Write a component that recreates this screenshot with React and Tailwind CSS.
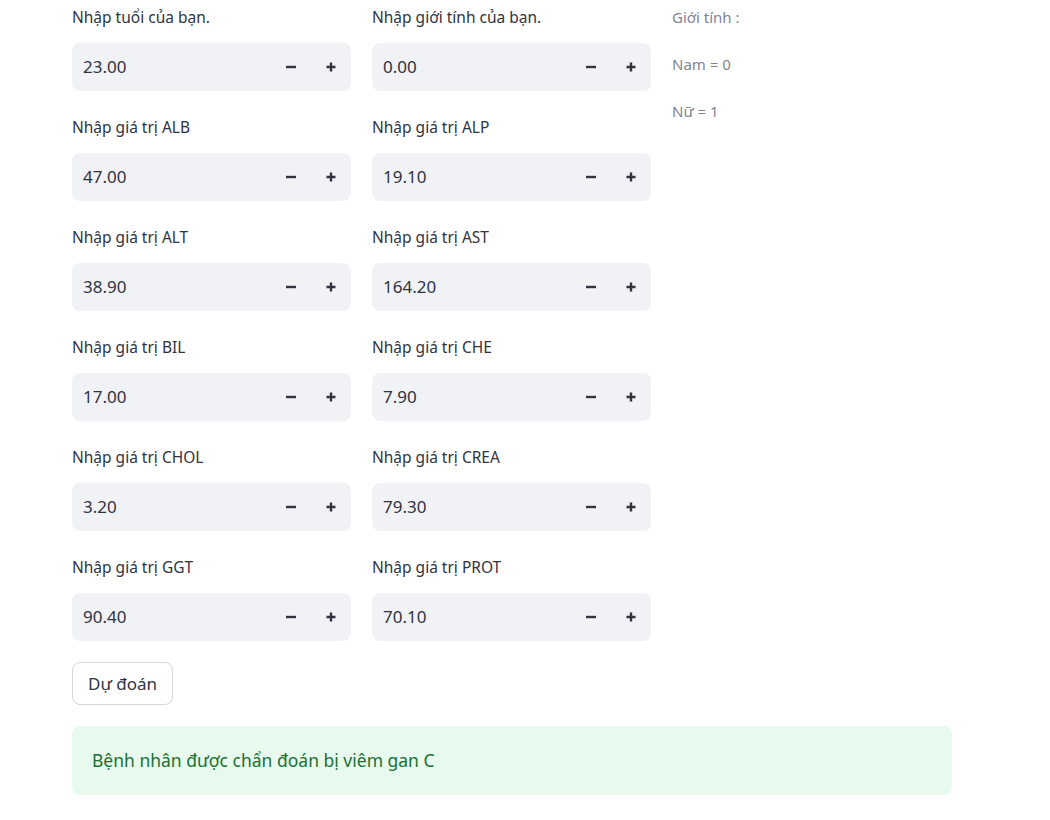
import React, { useState } from 'react'

const fields = [
  ['Nhập tuổi của bạn.', '23.00', 'Nhập giới tính của bạn.', '0.00'],
  ['Nhập giá trị ALB', '47.00', 'Nhập giá trị ALP', '19.10'],
  ['Nhập giá trị ALT', '38.90', 'Nhập giá trị AST', '164.20'],
  ['Nhập giá trị BIL', '17.00', 'Nhập giá trị CHE', '7.90'],
  ['Nhập giá trị CHOL', '3.20', 'Nhập giá trị CREA', '79.30'],
  ['Nhập giá trị GGT', '90.40', 'Nhập giá trị PROT', '70.10'],
]

const MinusIcon = () => (
  <svg width="12" height="12" viewBox="0 0 12 12">
    <path d="M1 6h10" stroke="#31333f" strokeWidth="2.4" strokeLinecap="butt" />
  </svg>
)

const PlusIcon = () => (
  <svg width="12" height="12" viewBox="0 0 12 12">
    <path d="M1.5 6h9M6 1.5v9" stroke="#31333f" strokeWidth="2.4" strokeLinecap="butt" />
  </svg>
)

const NumberInput = ({ label, value }) => (
  <div className="flex flex-col">
    <label className="h-[43px] pt-[5px] text-[15.5px] text-[#31333f] leading-[24px]">{label}</label>
    <div className="flex h-[48px] items-center rounded-lg bg-[#f0f2f6]">
      <span className="flex-1 pl-[11px] text-[17px] text-[#31333f]">{value}</span>
      <button className="flex h-full w-[40px] items-center justify-center">
        <MinusIcon />
      </button>
      <button className="flex h-full w-[40px] items-center justify-center">
        <PlusIcon />
      </button>
    </div>
  </div>
)

const App = () => {
  const [showResult] = useState(true)

  return (
    <div className="min-h-screen bg-white font-['Noto_Sans',sans-serif]">
      <div className="ml-[72px] w-[880px]">
        <div className="grid grid-cols-[279px_279px_279px] gap-x-[21px]">
          <div className="flex flex-col gap-[19px]">
            {fields.map((row) => (
              <NumberInput key={row[0]} label={row[0]} value={row[1]} />
            ))}
          </div>
          <div className="flex flex-col gap-[19px]">
            {fields.map((row) => (
              <NumberInput key={row[2]} label={row[2]} value={row[3]} />
            ))}
          </div>
          {/* Gender hint */}
          <div className="flex flex-col gap-[23px] pt-[5px] text-[15px] leading-[24px] text-[#808495]">
            <p>Giới tính :</p>
            <p>Nam = 0</p>
            <p>Nữ = 1</p>
          </div>
        </div>

        <button className="mt-[21px] h-[43px] rounded-lg border border-[#d6d6d9] bg-white px-[15px] text-[17px] text-[#31333f]">
          Dự đoán
        </button>

        {showResult && (
          <div className="mt-[21px] flex h-[69px] items-center rounded-lg bg-[#e8f9ee] px-[20px] text-[17.5px] text-[#177233]">
            Bệnh nhân được chẩn đoán bị viêm gan C
          </div>
        )}
      </div>
    </div>
  )
}

export default App
